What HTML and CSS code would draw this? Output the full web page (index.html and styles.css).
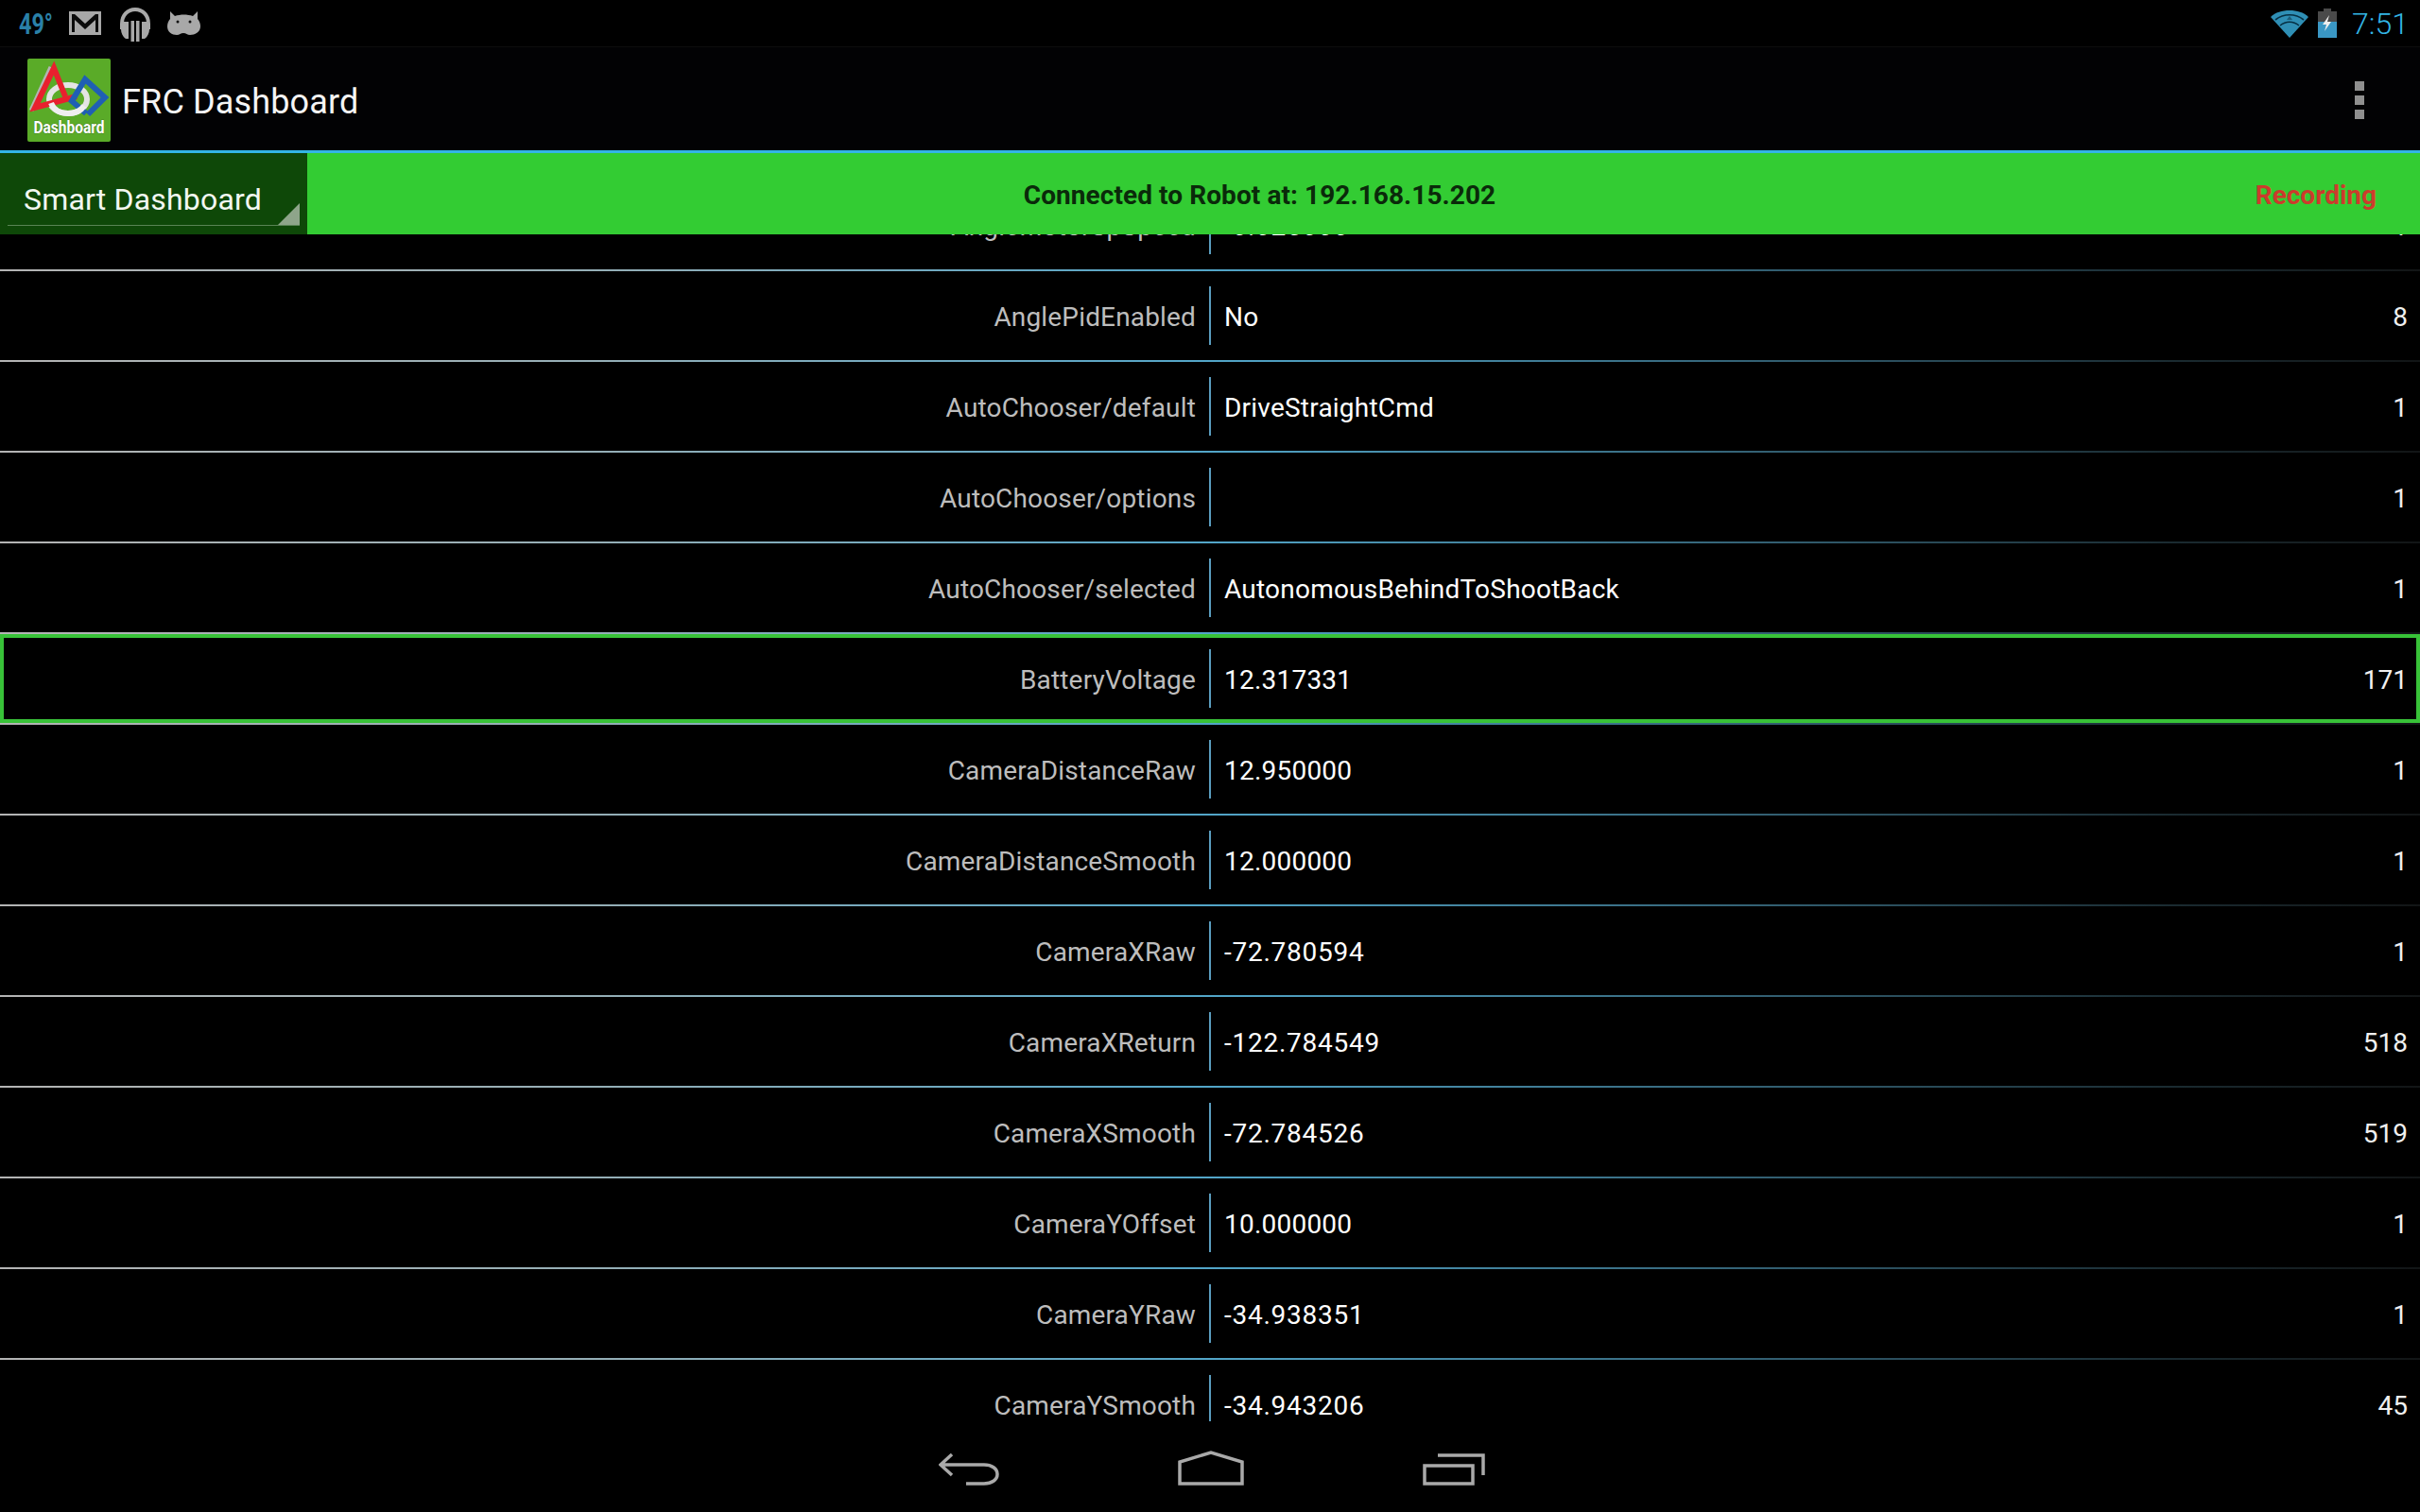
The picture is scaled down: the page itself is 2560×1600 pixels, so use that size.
FILE: index.html
```html
<!DOCTYPE html>
<html lang="en">
<head>
<meta charset="utf-8">
<title>FRC Dashboard</title>
<link rel="stylesheet" href="styles.css">
</head>
<body>
<div class="tablet">
  <header class="status">
    <div class="status-left">
      <svg class="temp" viewBox="0 0 38 30"><text x="0" y="26" textLength="36" lengthAdjust="spacingAndGlyphs" class="temp-text">49°</text></svg>
      <svg class="ic-mail" viewBox="0 0 34 25"><path fill="#a8a8a8" d="M0 0h34v25H0z"/><path fill="#0c0c0c" d="M3 3h3l11 10L28 3h3v19h-3V9L17 19 6 9v13H3z"/></svg>
      <svg class="ic-phones" viewBox="0 0 34 36"><path fill="none" stroke="#a8a8a8" stroke-width="4" d="M3 23v-6C3 8 9 2 17 2s14 6 14 15v6"/><path fill="#a8a8a8" d="M5 15h5v18H7c-3-2-5-6-5-10 0-3 1-6 3-8zM29 15h-5v18h3c3-2 5-6 5-10 0-3-1-6-3-8zM12.500 14h3.500v22h-3.500zM18 14h3.500v22H18z"/></svg>
      <svg class="ic-bot" viewBox="0 0 35 27"><path fill="#a8a8a8" d="M3 1l5 5c6-2 13-2 19 0l5-5 0 8c2 2 3 5 3 8 0 6-6 9-11 9-3 0-4-2-7-2s-4 2-7 2C5 26 0 23 0 17c0-3 1-6 3-8z"/><circle cx="11" cy="12" r="1.500" fill="#111"/><circle cx="24" cy="12" r="1.500" fill="#111"/></svg>
    </div>
    <div class="status-right">
      <svg class="ic-wifi" viewBox="0 0 40 30"><path fill="#2f8fb5" d="M0 8C5 3 12 1 20 1s15 2 20 7L20 30z"/><path fill="none" stroke="#063044" stroke-width="1.600" d="M5 11c9-7 21-7 30 0M10 17c6-5 14-5 20 0"/><path fill="#1c5c78" d="M17 11l3-4 3 4z"/></svg>
      <svg class="ic-batt" viewBox="0 0 20 31"><path fill="#4a4a4a" d="M6 0h8v3h6v11H0V3h6z"/><path fill="#3a97c4" d="M0 14h20v17H0z"/><path fill="#eee" d="M12 7L5 17h4l-2 7 7-10h-4z"/></svg>
      <span class="clock">7:51</span>
    </div>
  </header>

  <div class="actionbar">
    <svg class="logo" viewBox="0 0 88 88">
      <rect width="88" height="88" rx="2" fill="#5aab28"/>
      <path fill="none" stroke="#b4b4b4" stroke-width="5" d="M25 9L4 55"/>
      <ellipse cx="43" cy="43" rx="20" ry="15" fill="none" stroke="#e4e4e4" stroke-width="6"/>
      <path fill="none" stroke="#e8202e" stroke-width="6" d="M52 40L8 52 28 10l12 30"/>
      <path fill="none" stroke="#1f5fb4" stroke-width="6" d="M62 58L47 45 61 22l21 19-18 18"/>
      <path fill="none" stroke="#efefef" stroke-width="6" d="M25 47c3 8 11 11 18 11s13-2 17-8"/>
      <text x="44" y="79" textLength="75" lengthAdjust="spacingAndGlyphs" text-anchor="middle" class="logo-text">Dashboard</text>
    </svg>
    <span class="app-title">FRC Dashboard</span>
    <div class="overflow"><i></i><i></i><i></i></div>
  </div>

  <div class="connbar">
    <div class="spinner">
      <span class="spinner-text">Smart Dashboard</span>
      <span class="spinner-corner"></span>
    </div>
    <div class="conn-main">
      <span class="conn-text">Connected to Robot at: 192.168.15.202</span>
      <span class="rec-text">Recording</span>
    </div>
  </div>

  <main class="list">
    <div class="row first"><div class="k">AngleMotorSpSpeed</div><div class="v neg">-0.025000</div><div class="n">1</div></div>
    <div class="row"><div class="k">AnglePidEnabled</div><div class="v">No</div><div class="n">8</div></div>
    <div class="row"><div class="k">AutoChooser/default</div><div class="v">DriveStraightCmd</div><div class="n">1</div></div>
    <div class="row"><div class="k">AutoChooser/options</div><div class="v"></div><div class="n">1</div></div>
    <div class="row"><div class="k">AutoChooser/selected</div><div class="v">AutonomousBehindToShootBack</div><div class="n">1</div></div>
    <div class="row selected"><div class="k">BatteryVoltage</div><div class="v">12.317331</div><div class="n">171</div></div>
    <div class="row"><div class="k">CameraDistanceRaw</div><div class="v">12.950000</div><div class="n">1</div></div>
    <div class="row"><div class="k">CameraDistanceSmooth</div><div class="v">12.000000</div><div class="n">1</div></div>
    <div class="row"><div class="k">CameraXRaw</div><div class="v neg">-72.780594</div><div class="n">1</div></div>
    <div class="row"><div class="k">CameraXReturn</div><div class="v neg">-122.784549</div><div class="n">518</div></div>
    <div class="row"><div class="k">CameraXSmooth</div><div class="v neg">-72.784526</div><div class="n">519</div></div>
    <div class="row"><div class="k">CameraYOffset</div><div class="v">10.000000</div><div class="n">1</div></div>
    <div class="row"><div class="k">CameraYRaw</div><div class="v neg">-34.938351</div><div class="n">1</div></div>
    <div class="row"><div class="k">CameraYSmooth</div><div class="v neg">-34.943206</div><div class="n">45</div></div>
  </main>

  <nav class="navbar">
    <svg class="ic-back" viewBox="0 0 64 34"><path fill="none" stroke="#a9a9a9" stroke-width="3.500" d="M14 1L2 12l12 11M2 12h46c8 0 14 4 14 10s-6 10-14 10H29"/></svg>
    <svg class="ic-home" viewBox="0 0 70 37"><path fill="none" stroke="#a9a9a9" stroke-width="3.500" d="M2 35V12L35 2l33 10v23z"/></svg>
    <svg class="ic-recent" viewBox="0 0 66 34"><path fill="none" stroke="#a9a9a9" stroke-width="3.500" d="M16 2h48v21M2 13h51v19H2z"/></svg>
  </nav>
</div>
</body>
</html>
```
FILE: styles.css
```css
html, body { margin: 0; padding: 0; background: #000; }
.tablet {
  width: 2560px;
  height: 1600px;
  background: #000;
  overflow: hidden;
  display: flex;
  flex-direction: column;
  font-family: Roboto, "Liberation Sans", sans-serif;
  color: #fff;
}
.status {
  height: 50px;
  flex: none;
  display: flex;
  justify-content: space-between;
  align-items: center;
  border-bottom: 1px solid #0d0d0d;
  box-sizing: border-box;
}
.status-left { display: flex; align-items: center; margin-left: 20px; }
.temp { width: 38px; height: 30px; margin-right: 15px; }
.temp-text { font: 700 31px Roboto, sans-serif; fill: #2a80a8; }
.ic-mail { width: 34px; height: 25px; margin-right: 19px; }
.ic-phones { width: 34px; height: 36px; margin-right: 17px; margin-top: 2px; }
.ic-bot { width: 35px; height: 27px; }
.status-right { display: flex; align-items: center; margin-right: 12px; }
.ic-wifi { width: 40px; height: 30px; margin-right: 10px; }
.ic-batt { width: 20px; height: 31px; margin-right: 16px; }
.clock { font-size: 32px; font-weight: 300; color: #33b5e5; line-height: 32px; }

.actionbar {
  height: 109px;
  flex: none;
  display: flex;
  align-items: center;
  background: #020204;
  padding: 3px 59px 0 29px;
  box-sizing: border-box;
}
.logo { width: 88px; height: 88px; flex: none; }
.logo-text { font: 700 18.500px Roboto, sans-serif; fill: #fff; stroke: #2c5a14; stroke-width: 0.600px; paint-order: stroke; }
.app-title { font-size: 36px; letter-spacing: 0.150px; margin-left: 12px; padding-top: 3px; flex: 1; color: #f4f4f4; }
.overflow { display: flex; flex-direction: column; gap: 5px; }
.overflow i { display: block; width: 10px; height: 10px; background: #8f8f8f; }

.connbar {
  height: 89px;
  flex: none;
  display: flex;
  border-top: 3px solid #33b5e5;
  box-sizing: border-box;
  background: #33cc33;
  position: relative;
  z-index: 1;
}
.spinner {
  width: 325px;
  flex: none;
  background: #0e4808;
  position: relative;
  box-sizing: border-box;
  padding: 30px 0 0 25px;
}
.spinner::after {
  content: "";
  position: absolute;
  left: 8px;
  right: 8px;
  bottom: 9px;
  height: 1px;
  background: #5a8455;
}
.spinner-text { font-size: 32px; letter-spacing: 0.180px; line-height: 38px; display: block; color: #f2f7f1; }
.spinner-corner {
  position: absolute;
  right: 8px;
  bottom: 9px;
  width: 0;
  height: 0;
  border-style: solid;
  border-width: 0 0 24px 24px;
  border-color: transparent transparent #8ea58a transparent;
}
.conn-main {
  flex: 1;
  display: flex;
  position: relative;
  justify-content: center;
  padding-top: 28px;
  box-sizing: border-box;
  padding-right: 220px;
}
.conn-text { font-size: 28px; font-weight: 700; letter-spacing: 0.080px; line-height: 34px; color: #0a2a0a; }
.rec-text {
  position: absolute;
  right: 46px;
  top: 28px;
  font-size: 28px;
  font-weight: 700;
  line-height: 34px;
  color: #cc3b2c;
}

.list {
  flex: none;
  height: 1256px;
  overflow: hidden;
  background: #000;
}
.row {
  height: 96px;
  box-sizing: border-box;
  display: flex;
  align-items: stretch;
  padding-bottom: 2px;
  background: linear-gradient(90deg, #b4b4b4 0%, #94aeb6 25%, #52a5c8 50%, #37697e 70%, #1a2a30 90%, #121516 100%) left bottom / 100% 2px no-repeat;
  font-size: 28px;
  line-height: 34px;
}
.row.first { margin-top: -57px; }
.k, .v, .n { display: flex; align-items: center; box-sizing: border-box; }
.k {
  width: 1279px;
  flex: none;
  justify-content: flex-end;
  padding: 4px 14px 0 0;
  letter-spacing: 0.160px;
  color: #bdbdbd;
}
.v {
  flex: 1;
  margin: 16px 0;
  padding: 3px 0 0 14px;
  border-left: 2px solid #5b9dbf;
  letter-spacing: 0.220px;
  color: #fff;
}
.v.neg { letter-spacing: 0.750px; }
.n { width: 200px; flex: none; justify-content: flex-end; padding: 4px 13px 0 0; color: #f0f0f0; }
.row.selected { position: relative; }
.row.selected::before {
  content: "";
  position: absolute;
  left: 0;
  right: 0;
  top: 0;
  bottom: 2px;
  border: 4px solid #38c238;
  pointer-events: none;
}

.navbar {
  height: 96px;
  flex: none;
  background: #000;
  display: flex;
  justify-content: center;
  align-items: flex-end;
  gap: 189px;
  padding: 0 0 28px 3px;
  box-sizing: border-box;
}
.ic-back { width: 64px; height: 34px; }
.ic-home { width: 70px; height: 37px; }
.ic-recent { width: 66px; height: 34px; }
```
